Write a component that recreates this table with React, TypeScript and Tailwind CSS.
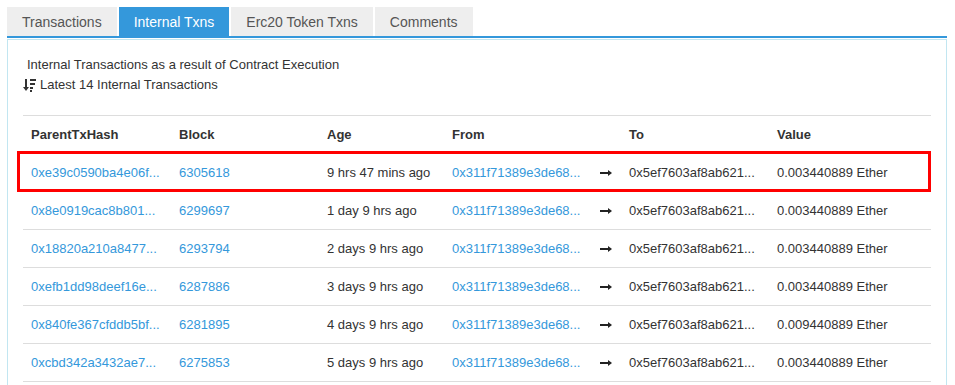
const tabs = ['Transactions', 'Internal Txns', 'Erc20 Token Txns', 'Comments'];

const rows = [
    { hash: '0xe39c0590ba4e06f...', block: '6305618', age: '9 hrs 47 mins ago', value: '0.003440889' },
    { hash: '0x8e0919cac8b801...', block: '6299697', age: '1 day 9 hrs ago', value: '0.003440889' },
    { hash: '0x18820a210a8477...', block: '6293794', age: '2 days 9 hrs ago', value: '0.003440889' },
    { hash: '0xefb1dd98deef16e...', block: '6287886', age: '3 days 9 hrs ago', value: '0.003440889' },
    { hash: '0x840fe367cfddb5bf...', block: '6281895', age: '4 days 9 hrs ago', value: '0.009440889' },
    { hash: '0xcbd342a3432ae7...', block: '6275853', age: '5 days 9 hrs ago', value: '0.003440889' },
];

const cols = 'grid grid-cols-[148px_148px_125px_148px_29px_148px_1fr] items-center';

function SortIcon() {
    return (
        <svg width="14" height="14" viewBox="0 0 14 14" className="mr-[3px]">
            {/* down arrow */}
            <rect x="2" y="1" width="2" height="9" fill="#333" />
            <path d="M0 9 L6 9 L3 13 Z" fill="#333" />
            {/* descending bars */}
            <rect x="7" y="1" width="6" height="2" fill="#333" />
            <rect x="7" y="5" width="5" height="2" fill="#333" />
            <rect x="7" y="9" width="3" height="2" fill="#333" />
            <rect x="7" y="12" width="2" height="2" fill="#333" />
        </svg>
    );
}

function Arrow() {
    return (
        <svg width="12" height="8" viewBox="0 0 12 8">
            <rect x="0" y="3" width="9" height="2" fill="#222" />
            <path d="M8 1 L12 4 L8 7 Z" fill="#222" />
        </svg>
    );
}

export default function App() {
    return (
        <div className="bg-white min-h-screen pt-[7px] pl-[7px] font-['Liberation_Sans',Arial,sans-serif] text-[13px] text-[#333]">
            <div className="w-[940px]">

                {/* --- TABS --- */}
                <div className="flex gap-[2px] border-b-2 border-[#3498db]">
                    {tabs.map((t, i) => (
                        <div
                            key={t}
                            className={
                                i === 1
                                    ? 'h-[29px] px-[15px] pt-px flex items-center text-[14px] bg-[#3498db] text-white'
                                    : 'h-[29px] px-[15px] pt-px flex items-center text-[14px] bg-[#eeeeee] text-[#555]'
                            }
                        >
                            {t}
                        </div>
                    ))}
                </div>

                {/* --- PANEL --- */}
                <div className="mt-px border border-[#c2e6f1] px-[15px] pt-[15px] pb-[15px]">
                    <div className="leading-[20px] pl-1">Internal Transactions as a result of Contract Execution</div>
                    <div className="leading-[20px] flex items-center">
                        <SortIcon />
                        <span>Latest 14 Internal Transactions</span>
                    </div>

                    <div className="mt-[20px] border-t border-[#dddddd]">
                        <div className={`${cols} h-[38px] border-b border-[#dddddd] font-bold`}>
                            <div className="pl-2">ParentTxHash</div>
                            <div className="pl-2">Block</div>
                            <div className="pl-2">Age</div>
                            <div className="pl-2">From</div>
                            <div />
                            <div className="pl-2">To</div>
                            <div className="pl-2">Value</div>
                        </div>

                        {rows.map((r, i) => (
                            <div key={r.hash} className={`${cols} relative h-[38px] border-b border-[#dddddd]`}>
                                <div className="pl-2 text-[#3498db]">{r.hash}</div>
                                <div className="pl-2 text-[#3498db]">{r.block}</div>
                                <div className="pl-2">{r.age}</div>
                                <div className="pl-2 text-[#3498db]">0x311f71389e3de68...</div>
                                <div className="pl-2 flex items-center"><Arrow /></div>
                                <div className="pl-2">0x5ef7603af8ab621...</div>
                                <div className="pl-2">{r.value} Ether</div>
                                {i === 0 && (
                                    <div className="absolute -top-[3px] -left-[6px] right-0 -bottom-px border-[3px] border-[#ff0000] pointer-events-none" />
                                )}
                            </div>
                        ))}
                    </div>
                </div>
            </div>
        </div>
    );
}
